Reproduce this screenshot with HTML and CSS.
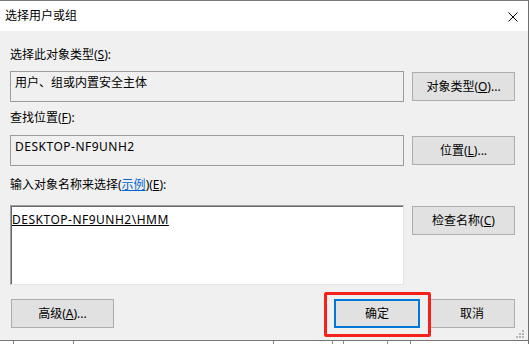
FILE: index.html
```html
<!DOCTYPE html>
<html lang="zh-CN">
<head>
    <meta charset="UTF-8">
    <meta name="viewport" content="width=device-width, initial-scale=1.0">
    <title>选择用户或组</title>
    <link rel="stylesheet" href="styles.css">
</head>
<body>
    <div class="window">
        <div class="titlebar">
            <span class="title">选择用户或组</span>
            <svg class="close" width="10" height="10" viewBox="0 0 10 10">
                <path d="M0.5 0.5 L9.5 9.5 M9.5 0.5 L0.5 9.5" stroke="#000" stroke-width="1" fill="none"/>
            </svg>
        </div>
        <div class="dialog">
            <div class="label first">选择此对象类型(<u>S</u>):</div>
            <div class="row">
                <div class="box">用户、组或内置安全主体</div>
                <button class="btn side">对象类型(<u>O</u>)...</button>
            </div>

            <div class="label">查找位置(<u>F</u>):</div>
            <div class="row row-gap">
                <div class="box latin">DESKTOP-NF9UNH2</div>
                <button class="btn side">位置(<u>L</u>)...</button>
            </div>

            <div class="label label-gap">输入对象名称来选择(<span class="link">示例</span>)(<u>E</u>):</div>
            <div class="row row-gap-lg">
                <div class="names latin"><u>DESKTOP-NF9UNH2\HMM</u></div>
                <button class="btn side">检查名称(<u>C</u>)</button>
            </div>

            <div class="footer">
                <button class="btn advanced">高级(<u>A</u>)...</button>
                <div class="actions">
                    <div class="ok-wrap">
                        <button class="btn ok">确定</button>
                        <span class="highlight"></span>
                    </div>
                    <button class="btn cancel">取消</button>
                </div>
            </div>

            <svg class="grip" width="10" height="10" viewBox="0 0 10 10">
                <rect x="7" y="1" width="2" height="2" fill="#b5b5b5"/>
                <rect x="4" y="4" width="2" height="2" fill="#b5b5b5"/>
                <rect x="7" y="4" width="2" height="2" fill="#b5b5b5"/>
                <rect x="1" y="7" width="2" height="2" fill="#b5b5b5"/>
                <rect x="4" y="7" width="2" height="2" fill="#b5b5b5"/>
                <rect x="7" y="7" width="2" height="2" fill="#b5b5b5"/>
            </svg>
        </div>
        <div class="behind">
            <span class="cell c1"></span>
            <span class="cell c2"></span>
            <span class="cell c3"></span>
            <span class="cell c4"></span>
            <span class="cell c5"></span>
            <span class="cell c6"></span>
            <span class="cell c7"></span>
        </div>
    </div>
</body>
</html>
```

FILE: styles.css
```css
body {
    margin: 0;
    background-color: #ffffff;
    font-family: "Noto Sans", "Noto Sans CJK SC", sans-serif;
    font-size: 12px;
    color: #000;
}
.window {
    width: 528px;
    border-right: 1px solid #6f6f6f;
    overflow: hidden;
}
.titlebar {
    height: 30px;
    border-top: 1px solid #7a7a7a;
    background-color: #fff;
    display: flex;
    align-items: center;
    justify-content: space-between;
    padding: 0 10px 0 5px;
}
.title {
    line-height: 16px;
}
.close {
    display: block;
    margin-top: 1px;
}
.dialog {
    position: relative;
    height: 293px;
    padding: 16px 13px 0 10px;
    background-color: #f0f0f0;
    border-bottom: 1px solid #777;
}
.label {
    line-height: 16px;
    margin-top: 8px;
}
.label.first {
    margin-top: 0;
}
.label-gap {
    margin-top: 11px;
}
.link {
    color: #0066cc;
    text-decoration: underline;
}
.row {
    display: flex;
    gap: 8px;
    align-items: flex-start;
    margin-top: 8px;
}
.row-gap {
    margin-top: 9px;
}
.row-gap-lg {
    margin-top: 12px;
}
.box {
    flex: 1;
    padding: 3px 4px;
    box-sizing: border-box;
    height: 31px;
    line-height: 16px;
    border: 1px solid #9c9c9c;
    background-color: #f0f0f0;
}
.latin {
    letter-spacing: 0.5px;
}
.names {
    flex: 1;
    height: 80px;
    box-sizing: border-box;
    padding: 6px 1px;
    line-height: 16px;
    background-color: #fff;
    border-top: 1px solid #a0a0a0;
    border-left: 1px solid #a0a0a0;
    border-right: 1px solid #e3e3e3;
    border-bottom: 1px solid #e3e3e3;
    box-shadow: inset 1px 1px 0 #696969;
}
.btn {
    font-family: inherit;
    font-size: 12px;
    color: #000;
    height: 29px;
    padding: 0;
    background-color: #e1e1e1;
    border: 1px solid #adadad;
    line-height: 16px;
}
.side {
    width: 103px;
    margin-top: 1px;
    flex-shrink: 0;
}
.footer {
    display: flex;
    justify-content: space-between;
    margin-top: 14px;
}
.advanced {
    width: 103px;
    margin-left: 1px;
}
.actions {
    display: flex;
    gap: 9px;
}
.ok-wrap {
    position: relative;
}
.ok {
    width: 86px;
    border: 2px solid #0078d7;
}
.cancel {
    width: 86px;
}
.highlight {
    position: absolute;
    left: -10px;
    top: -7px;
    width: 101px;
    height: 39px;
    border: 3px solid #f5221b;
    border-radius: 2px;
}
.grip {
    position: absolute;
    right: 3px;
    bottom: 1px;
}
.behind {
    display: flex;
    height: 3px;
    background-color: #fff;
}
.cell {
    border-left: 1px solid #8a8a8a;
}
.c1 { margin-left: 13px; width: 59px; }
.c2 { width: 199px; }
.c3 { width: 58px; }
.c4 { width: 10px; }
.c5 { width: 43px; }
.c6 { width: 22px; }
.c7 { width: 110px; }
```
